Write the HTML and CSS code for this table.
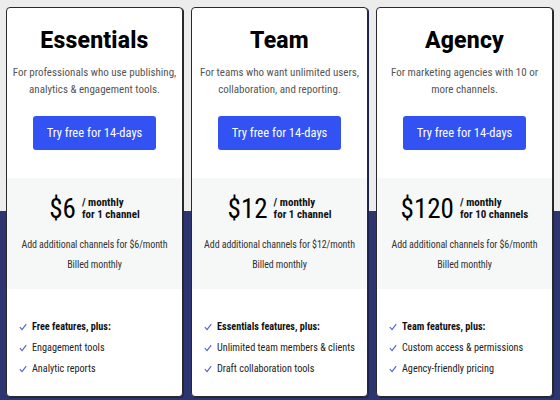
FILE: index.html
```html
<!DOCTYPE html>
<html>
<head>
<meta charset="utf-8">
<link rel="stylesheet" href="styles.css">
</head>
<body>
<div class="page">
  <div class="cards">
    <div class="card">
      <div class="top">
        <h2 class="title">Essentials</h2>
        <p class="desc">For professionals who use publishing, analytics &amp; engagement tools.</p>
        <a class="btn">Try free for 14-days</a>
      </div>
      <div class="price">
        <div class="amount"><span class="num">$6</span><span class="per">/ monthly<br>for 1 channel</span></div>
        <p class="note">Add additional channels for $6/month</p>
        <p class="note">Billed monthly</p>
      </div>
      <ul class="features">
        <li class="strong"><svg class="chk" viewBox="0 0 10 10"><path d="M1 5.2 L3.8 8.2 L9 1.5"/></svg>Free features, plus:</li>
        <li><svg class="chk" viewBox="0 0 10 10"><path d="M1 5.2 L3.8 8.2 L9 1.5"/></svg>Engagement tools</li>
        <li><svg class="chk" viewBox="0 0 10 10"><path d="M1 5.2 L3.8 8.2 L9 1.5"/></svg>Analytic reports</li>
      </ul>
    </div>
    <div class="card">
      <div class="top">
        <h2 class="title">Team</h2>
        <p class="desc">For teams who want unlimited users, collaboration, and reporting.</p>
        <a class="btn">Try free for 14-days</a>
      </div>
      <div class="price">
        <div class="amount"><span class="num">$12</span><span class="per">/ monthly<br>for 1 channel</span></div>
        <p class="note">Add additional channels for $12/month</p>
        <p class="note">Billed monthly</p>
      </div>
      <ul class="features">
        <li class="strong"><svg class="chk" viewBox="0 0 10 10"><path d="M1 5.2 L3.8 8.2 L9 1.5"/></svg>Essentials features, plus:</li>
        <li><svg class="chk" viewBox="0 0 10 10"><path d="M1 5.2 L3.8 8.2 L9 1.5"/></svg>Unlimited team members &amp; clients</li>
        <li><svg class="chk" viewBox="0 0 10 10"><path d="M1 5.2 L3.8 8.2 L9 1.5"/></svg>Draft collaboration tools</li>
      </ul>
    </div>
    <div class="card">
      <div class="top">
        <h2 class="title">Agency</h2>
        <p class="desc">For marketing agencies with 10 or more channels.</p>
        <a class="btn">Try free for 14-days</a>
      </div>
      <div class="price">
        <div class="amount"><span class="num">$120</span><span class="per">/ monthly<br>for 10 channels</span></div>
        <p class="note">Add additional channels for $6/month</p>
        <p class="note">Billed monthly</p>
      </div>
      <ul class="features">
        <li class="strong"><svg class="chk" viewBox="0 0 10 10"><path d="M1 5.2 L3.8 8.2 L9 1.5"/></svg>Team features, plus:</li>
        <li><svg class="chk" viewBox="0 0 10 10"><path d="M1 5.2 L3.8 8.2 L9 1.5"/></svg>Custom access &amp; permissions</li>
        <li><svg class="chk" viewBox="0 0 10 10"><path d="M1 5.2 L3.8 8.2 L9 1.5"/></svg>Agency-friendly pricing</li>
      </ul>
    </div>
  </div>
</div>
</body>
</html>
```

FILE: styles.css
```css
* { box-sizing: border-box; }
html, body { margin: 0; padding: 0; }
body {
  width: 560px;
  height: 400px;
  overflow: hidden;
  font-family: Roboto, "Noto Sans", sans-serif;
  background: linear-gradient(to bottom, #ececec 0, #ececec 211px, #2d3570 211px, #2d3570 100%);
}
.page { padding: 7px 12px 0 6px; }
.cards { display: flex; gap: 8px; }
.card {
  flex: 0 0 177px;
  height: 390px;
  background: #fff;
  border: 1px solid #2a2a2a;
  border-radius: 4px;
  overflow: hidden;
  display: flex;
  flex-direction: column;
  box-shadow: 1px 1px 0 #1e2450;
}
.top {
  height: 170px;
  text-align: center;
  padding-top: 18px;
}
.title {
  margin: 0;
  font-size: 23px;
  font-weight: 800;
  color: #000;
  line-height: 30px;
  letter-spacing: 0.2px;
}
.desc {
  margin: 8px 2px 0;
  font-size: 11px;
  line-height: 17px;
  color: #555;
  font-stretch: 75%;
  height: 34px;
}
.btn {
  display: inline-block;
  margin-top: 18px;
  width: 123px;
  height: 34px;
  line-height: 34px;
  background: #3352f3;
  color: #fff;
  font-size: 12.5px;
  font-stretch: 75%;
  border-radius: 3px;
}
.price {
  background: #f6f8f8;
  height: 111px;
  text-align: center;
  padding-top: 16px;
}
.amount {
  display: flex;
  justify-content: center;
  align-items: center;
  gap: 6px;
}
.num {
  font-size: 27px;
  line-height: 30px;
  color: #000;
  font-stretch: 85%;
}
.per {
  text-align: left;
  font-size: 11px;
  font-weight: 700;
  line-height: 12px;
  color: #111;
  font-stretch: 75%;
}
.note {
  margin: 15px 0 0;
  font-size: 10px;
  line-height: 12px;
  color: #333;
  font-stretch: 75%;
  letter-spacing: -0.1px;
}
.note + .note { margin-top: 8px; }
.features {
  list-style: none;
  margin: 0;
  padding: 31px 0 0 11px;
}
.features li {
  font-size: 10.2px;
  line-height: 13px;
  color: #222;
  margin-bottom: 8px;
  font-stretch: 75%;
  display: flex;
  align-items: center;
}
.features li.strong { font-weight: 700; color: #111; }
.chk {
  width: 8px;
  height: 8px;
  margin: 0 5px 0 1px;
  fill: none;
  stroke: #4a62d8;
  stroke-width: 1.4;
}
```
